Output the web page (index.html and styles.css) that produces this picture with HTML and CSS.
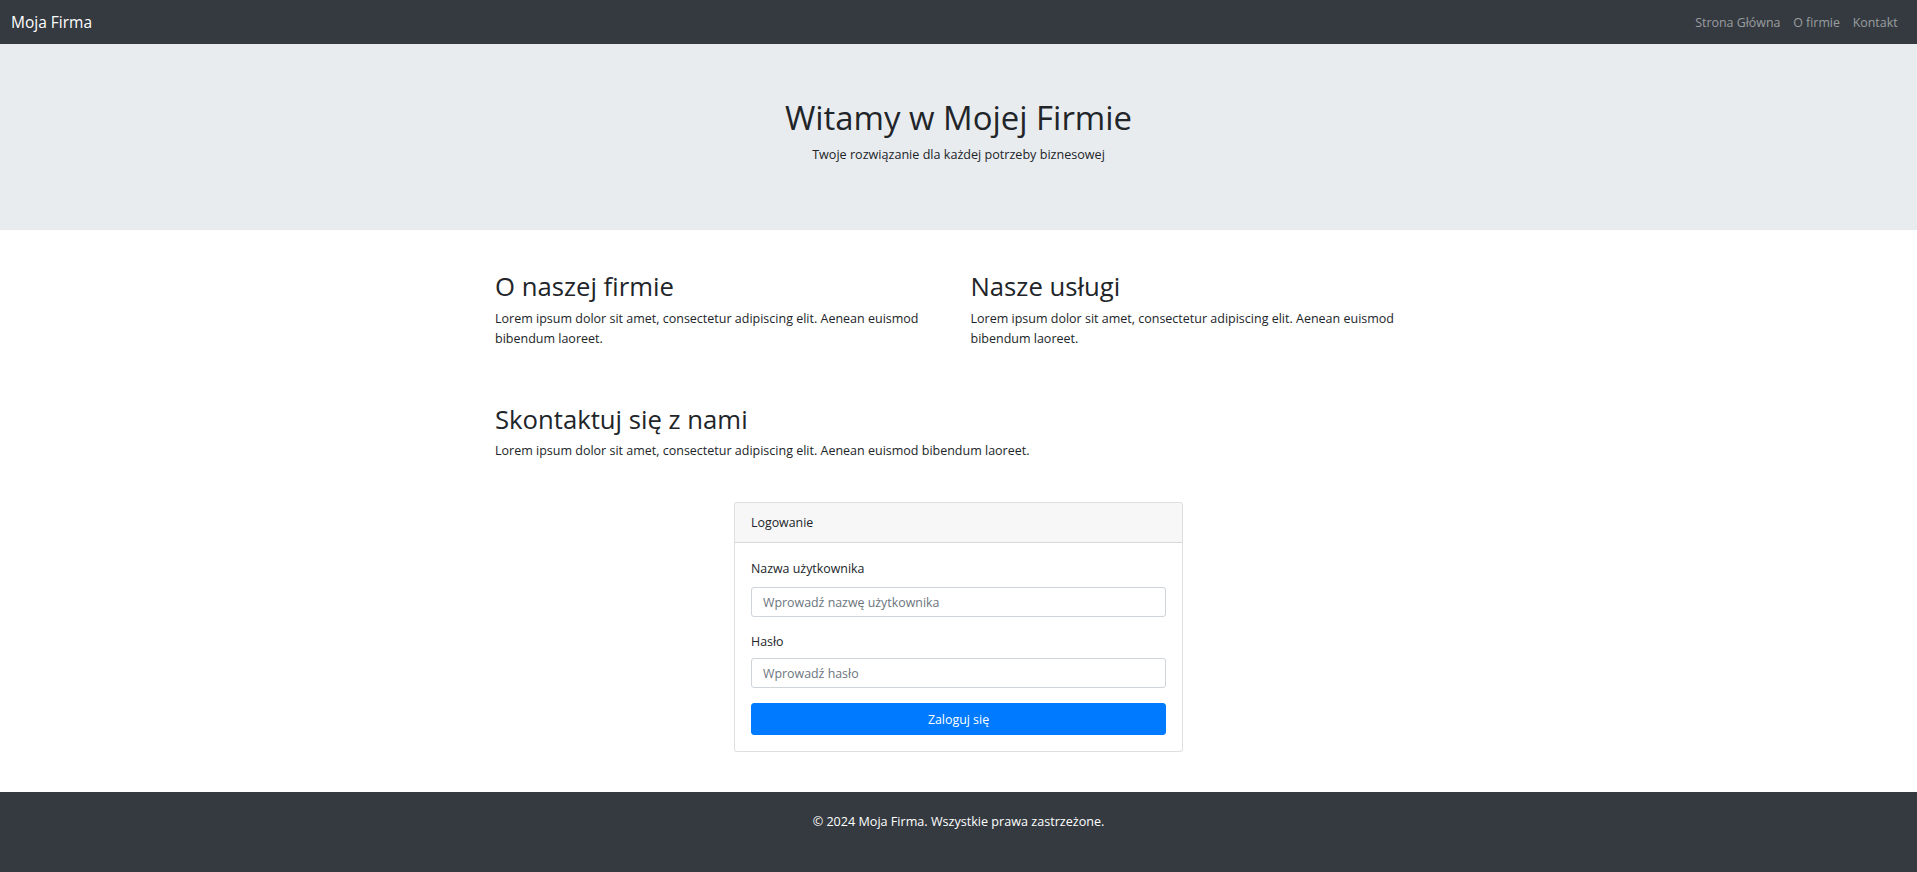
FILE: index.html
```html
<!DOCTYPE html>
<html lang="pl">
<head>
<meta charset="utf-8">
<title>Moja Firma</title>
<link rel="stylesheet" href="styles.css">
</head>
<body>
<nav class="navbar">
  <a class="brand" href="#">Moja Firma</a>
  <ul class="nav-links">
    <li><a href="#">Strona Główna</a></li>
    <li><a href="#">O firmie</a></li>
    <li><a href="#">Kontakt</a></li>
  </ul>
</nav>

<header class="hero">
  <h1 class="hero-title">Witamy w Mojej Firmie</h1>
  <p class="hero-sub">Twoje rozwiązanie dla każdej potrzeby biznesowej</p>
</header>

<main class="content">
  <div class="container">
    <div class="row">
      <section class="col">
        <h2 class="section-title">O naszej firmie</h2>
        <p class="text">Lorem ipsum dolor sit amet, consectetur adipiscing elit. Aenean euismod bibendum laoreet.</p>
      </section>
      <section class="col">
        <h2 class="section-title">Nasze usługi</h2>
        <p class="text">Lorem ipsum dolor sit amet, consectetur adipiscing elit. Aenean euismod bibendum laoreet.</p>
      </section>
    </div>
    <section class="contact">
      <h2 class="section-title contact-title">Skontaktuj się z nami</h2>
      <p class="text">Lorem ipsum dolor sit amet, consectetur adipiscing elit. Aenean euismod bibendum laoreet.</p>
    </section>

    <div class="card">
      <div class="card-header">Logowanie</div>
      <form class="card-body">
        <div class="form-group">
          <label class="label" for="username">Nazwa użytkownika</label>
          <input class="input" type="text" id="username" placeholder="Wprowadź nazwę użytkownika">
        </div>
        <div class="form-group">
          <label class="label label-sm" for="password">Hasło</label>
          <input class="input" type="password" id="password" placeholder="Wprowadź hasło">
        </div>
        <button class="btn" type="submit">Zaloguj się</button>
      </form>
    </div>
  </div>
</main>

<footer class="footer">
  <p class="footer-text">© 2024 Moja Firma. Wszystkie prawa zastrzeżone.</p>
</footer>
</body>
</html>
```
FILE: styles.css
```css
* { box-sizing: border-box; }

html, body {
  margin: 0;
  padding: 0;
}

body {
  font-family: "Open Sans", "Noto Sans", sans-serif;
  color: #212529;
  background: #fff;
  font-size: 12.4px;
}

/* Navbar */
.navbar {
  height: 44px;
  background: #343a40;
  display: flex;
  align-items: center;
  justify-content: space-between;
  padding: 0 13px 0 11px;
}

.brand {
  color: #fff;
  text-decoration: none;
  font-size: 15.5px;
  line-height: 24px;
}

.nav-links {
  list-style: none;
  margin: 0;
  padding: 0;
  display: flex;
}

.nav-links a {
  display: block;
  padding: 0 6.4px;
  color: rgba(255, 255, 255, 0.5);
  text-decoration: none;
  font-size: 12.4px;
  line-height: 19px;
}

/* Hero */
.hero {
  background: #e9ecef;
  padding: 51px 0 66px;
  text-align: center;
}

.hero-title {
  margin: 0 0 4px;
  font-size: 32.9px;
  font-weight: 500;
  line-height: 46px;
}

.hero-sub {
  margin: 0;
  font-size: 12.6px;
  line-height: 19px;
}

/* Content */
.content {
  padding-top: 41px;
}

.container {
  width: 927px;
  margin: 0 auto;
}

.row {
  display: grid;
  grid-template-columns: 1fr 1fr;
  column-gap: 24px;
}

.section-title {
  margin: 0 0 7px;
  font-size: 25.7px;
  font-weight: 500;
  line-height: 31px;
}

.text {
  margin: 0;
  font-size: 12.5px;
  line-height: 19.5px;
}

.contact {
  margin-top: 55.5px;
}

.contact-title {
  margin-bottom: 6.5px;
}

/* Card */
.card {
  width: 449px;
  margin: 41.5px auto 0;
  border: 1px solid rgba(0, 0, 0, 0.125);
  border-radius: 3px;
  background: #fff;
}

.card-header {
  padding: 10px 16px;
  line-height: 19px;
  font-size: 12.4px;
  background: rgba(0, 0, 0, 0.03);
  border-bottom: 1px solid rgba(0, 0, 0, 0.125);
  border-radius: 3px 3px 0 0;
}

.card-body {
  padding: 16px;
  margin: 0;
}

.form-group {
  margin-bottom: 15px;
}

.label {
  display: block;
  margin-bottom: 8px;
  line-height: 20px;
  font-size: 12.4px;
}

.label-sm {
  margin-bottom: 6px;
}

.input {
  display: block;
  width: 100%;
  height: 30px;
  padding: 0 11px;
  border: 1px solid #ced4da;
  border-radius: 3px;
  font-family: inherit;
  font-size: 12.4px;
  color: #495057;
  background: #fff;
}

.input::placeholder {
  color: #6c757d;
  opacity: 1;
}

.btn {
  display: block;
  width: 100%;
  height: 32px;
  border: 1px solid #007bff;
  border-radius: 3px;
  background: #007bff;
  color: #fff;
  font-family: inherit;
  font-size: 12.4px;
  cursor: pointer;
}

/* Footer */
.footer {
  margin-top: 40px;
  background: #343a40;
  padding: 20px 0 41px;
  text-align: center;
}

.footer-text {
  margin: 0;
  color: #fff;
  font-size: 12.6px;
  line-height: 19px;
}
```
